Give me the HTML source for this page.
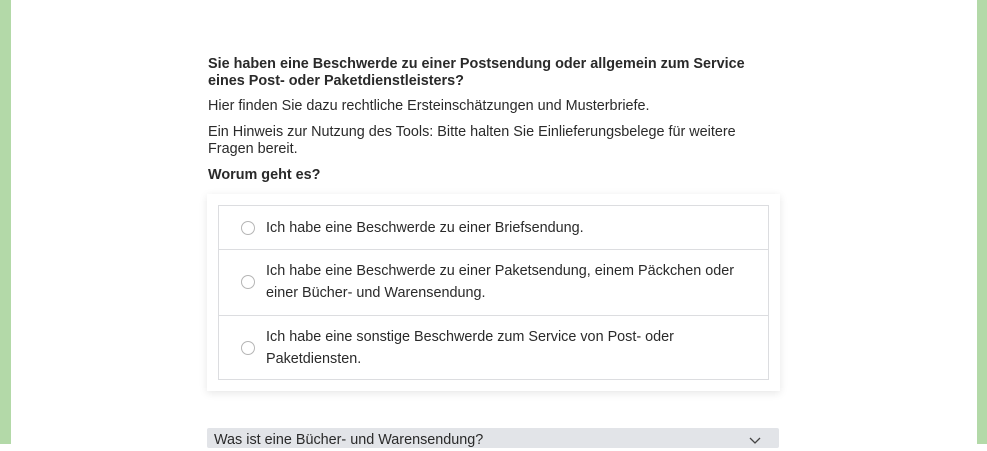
<!DOCTYPE html><html><head><meta charset="utf-8"><style>
body{margin:0;width:987px;height:444px;overflow:hidden;background:#fff;font-family:"Liberation Sans",sans-serif;color:#2a2a2a;position:relative}
.gl{position:absolute;top:0;left:0;width:11px;height:444px;background:#b3d9a8}
.gr{position:absolute;top:0;right:0;width:10px;height:444px;background:#b3d9a8}
.t{position:absolute;left:208px;font-size:14.4px;line-height:17px;width:560px}
b{font-weight:bold}
.card{position:absolute;left:207px;top:194px;width:573px;height:197px;background:#fff;box-shadow:0 2px 8px rgba(0,0,0,.1)}
.box{position:absolute;left:11px;top:11px;width:549px;height:173px;border:1px solid #dcdde0}
.row{position:absolute;left:0;width:549px;border-bottom:1px solid #dcdde0;font-size:14.4px;line-height:22px}
.row span{position:absolute;left:47px}
.rad{position:absolute;left:22px;width:12px;height:12px;border:1px solid #b5b5b5;border-radius:50%}
.acc{position:absolute;left:207px;top:428px;width:572px;height:20px;background:#e2e4e8;border-radius:2px;font-size:14.4px;line-height:22px}
</style></head><body>
<div class="gl"></div><div class="gr"></div>
<div class="t" style="top:56px"><b>Sie haben eine Beschwerde zu einer Postsendung oder allgemein zum Service eines Post- oder Paketdienstleisters?</b></div>
<div class="t" style="top:98px">Hier finden Sie dazu rechtliche Ersteinschätzungen und Musterbriefe.</div>
<div class="t" style="top:124px">Ein Hinweis zur Nutzung des Tools: Bitte halten Sie Einlieferungsbelege für weitere Fragen bereit.</div>
<div class="t" style="top:167px"><b>Worum geht es?</b></div>
<div class="card"><div class="box">
<div class="row" style="top:0;height:43px"><div class="rad" style="top:15px"></div><span style="top:11px">Ich habe eine Beschwerde zu einer Briefsendung.</span></div>
<div class="row" style="top:44px;height:65px"><div class="rad" style="top:25px"></div><span style="top:10px">Ich habe eine Beschwerde zu einer Paketsendung, einem Päckchen oder<br>einer Bücher- und Warensendung.</span></div>
<div class="row" style="top:110px;height:63px;border-bottom:none"><div class="rad" style="top:25px"></div><span style="top:10px">Ich habe eine sonstige Beschwerde zum Service von Post- oder<br>Paketdiensten.</span></div>
</div></div>
<div class="acc"><span style="position:absolute;left:7px;top:1px">Was ist eine Bücher- und Warensendung?</span>
<svg style="position:absolute;left:542px;top:9px" width="12" height="8"><path d="M1 1l5 5 5-5" fill="none" stroke="#444" stroke-width="1.3"/></svg></div>
</body></html>
